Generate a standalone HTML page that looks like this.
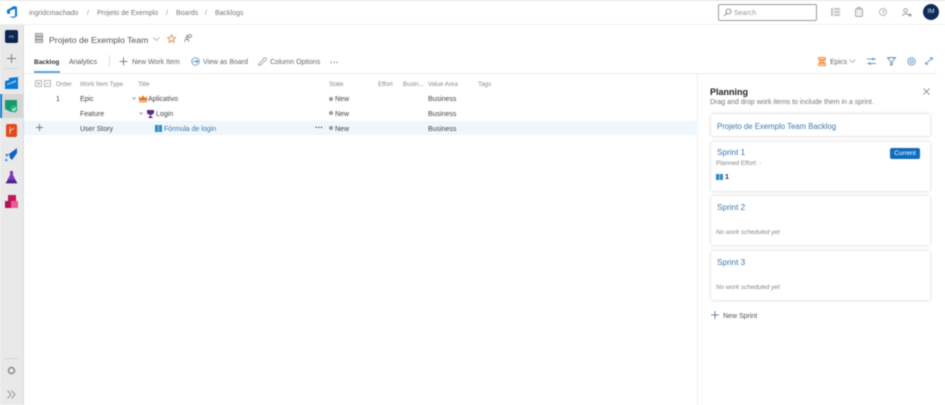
<!DOCTYPE html>
<html><head><meta charset="utf-8">
<style>
html,body{margin:0;padding:0;background:#fff}
#r{position:relative;width:945px;height:405px;overflow:hidden;background:#fff;font-family:"Liberation Sans",sans-serif;color:#444;filter:blur(.4px)}
.t{position:absolute;white-space:nowrap;line-height:12px;font-size:7px;margin-top:1.5px}
.h{color:#8a8a8a;font-size:6.2px;margin-top:.5px}
.b{position:absolute}
.card{position:absolute;left:711px;width:219px;background:#fff;border-radius:2px;box-shadow:0 0 3px rgba(0,0,0,.2)}
.l{color:#3f77ad;font-size:8.2px;margin-top:0}
svg{position:absolute;overflow:visible}
</style></head><body><div id="r">
<div class="b" style="left:0;top:0;width:945px;height:1px;background:#e4e4e4"></div>
<div class="b" style="left:0;top:24px;width:945px;height:1px;background:#eee"></div>
<div class="b" style="left:0;top:25px;width:23px;height:380px;background:#e9e9e9;border-right:1px solid #ddd"></div>
<svg style="left:6px;top:5px" width="12" height="14" viewBox="0 0 12 14"><path d="M1 5 L8 1 L11 2 V11 L8 13 L3 11.5 H9 V4 L4 5.5 V9 L1 8.5Z" fill="#0f78d4"/></svg>
<div class="t" style="left:29px;top:6px;color:#777">ingridcmachado</div>
<div class="t" style="left:87px;top:6px;color:#999">/</div>
<div class="t" style="left:97px;top:6px;color:#777">Projeto de Exemplo</div>
<div class="t" style="left:166px;top:6px;color:#999">/</div>
<div class="t" style="left:176px;top:6px;color:#777">Boards</div>
<div class="t" style="left:205px;top:6px;color:#999">/</div>
<div class="t" style="left:215px;top:6px;color:#777">Backlogs</div>

<div class="b" style="left:718px;top:4px;width:97px;height:15px;border:1px solid #9a9a9a;border-radius:2px"></div>
<svg style="left:723px;top:8px" width="9" height="9" viewBox="0 0 9 9" fill="none" stroke="#777" stroke-width=".8"><circle cx="5.5" cy="3.5" r="2.5"/><path d="M3.7 5.3 L1 8"/></svg>
<div class="t" style="left:734px;top:6.500px;color:#999">Search</div>
<svg style="left:831px;top:8px" width="9" height="8" viewBox="0 0 9 8" fill="#c4c4c4"><rect width="2" height="8"/><rect x="3" width="6" height="2"/><rect x="3" y="3" width="6" height="2"/><rect x="3" y="6" width="6" height="2"/></svg>
<svg style="left:855px;top:7px" width="8" height="10" viewBox="0 0 8 10" fill="#eee" stroke="#aaa"><rect x=".5" y="2" width="7" height="7.5" rx="1"/><path d="M2.500 2V.5H5.500V2" fill="none"/></svg>
<svg style="left:879px;top:8px" width="8" height="8" viewBox="0 0 8 8" fill="none" stroke="#aaa" stroke-width=".8"><circle cx="4" cy="4" r="3.600"/><path d="M3 3.200Q4 1.800 5 3T4 4.800V5.500M4 6V6.600"/></svg>
<svg style="left:902px;top:8px" width="10" height="9" viewBox="0 0 10 9" fill="none" stroke="#999" stroke-width=".9"><circle cx="3.500" cy="2.500" r="1.800"/><path d="M.5 8C.5 5.500 6 5 6.500 7"/><circle cx="8" cy="7" r="1" fill="#999"/></svg>
<div class="b" style="left:923px;top:4px;width:16px;height:16px;border-radius:50%;background:#0d2a5c;color:#dde;font-size:6.500px;line-height:16px;text-align:center">IM</div>

<div class="b" style="left:5px;top:30px;width:13px;height:13px;border-radius:2px;background:#0d2450;color:#ccd;font-size:4px;line-height:13px;text-align:center">PE</div>
<svg style="left:6px;top:53px" width="11" height="11" viewBox="0 0 11 11" stroke="#8a7a86" stroke-width="1"><path d="M5.500 1V10M1 5.500H10"/></svg>
<div class="b" style="left:4px;top:68px;width:15px;height:1px;background:#d4d4d4"></div>
<svg style="left:5px;top:77px" width="13" height="12" viewBox="0 0 13 12"><path d="M0 4L4 3V1L13 0V12H0Z" fill="#0f78d4"/><path d="M2 7L11 3V5L2 8Z" fill="#8cc8f0"/></svg>
<div class="b" style="left:0;top:94px;width:23px;height:24px;background:#d6d6d6"></div>
<div class="b" style="left:0;top:94px;width:2px;height:24px;background:#0f78d4"></div>
<svg style="left:5px;top:100px" width="13" height="13" viewBox="0 0 13 13"><path d="M0 0H12V9L6 12L0 9Z" fill="#17996e"/><circle cx="9" cy="9" r="3.500" fill="#2fb98a"/><path d="M7.500 9L8.700 10.300L10.800 7.800" stroke="#fff" fill="none"/></svg>
<svg style="left:6px;top:124px" width="11" height="13" viewBox="0 0 11 13"><rect width="11" height="13" rx="2" fill="#e0491f"/><path d="M4 3V10M4 7L8 4" stroke="#f9c0a8" fill="none"/></svg>
<svg style="left:5px;top:148px" width="13" height="13" viewBox="0 0 13 13"><path d="M4 6L12 0V5L7 12L5 10Z" fill="#0e63c4"/><path d="M0 6H4L2 9ZM1 10L3 13H0Z" fill="#2d8ae0"/></svg>
<svg style="left:5px;top:171px" width="13" height="13" viewBox="0 0 13 13"><path d="M5 0H8V4L12.500 12.500H.5L5 4Z" fill="#7a3cb8"/><path d="M3 9H10L11.500 12H1.500Z" fill="#52208e"/></svg>
<svg style="left:5px;top:195px" width="13" height="14" viewBox="0 0 13 14"><rect x="3" width="8" height="7" fill="#c2185b"/><rect y="6" width="7" height="7" fill="#ad1457"/><rect x="6" y="6" width="7" height="7" fill="#ec5a9a"/></svg>
<div class="b" style="left:4px;top:358px;width:15px;height:1px;background:#d4d4d4"></div>
<svg style="left:7px;top:366px" width="9" height="9" viewBox="0 0 9 9" fill="none" stroke="#888" stroke-width="1.500"><circle cx="4.500" cy="4.500" r="3"/></svg>
<svg style="left:7px;top:390px" width="9" height="9" viewBox="0 0 9 9" fill="none" stroke="#999"><path d="M.5 .5L4 4.500L.5 8.500M4.500 .5L8 4.500L4.500 8.500"/></svg>

<svg style="left:34px;top:33px" width="10" height="10" viewBox="0 0 10 10" fill="#ddd" stroke="#888" stroke-width=".8"><rect x="1.500" y=".5" width="7" height="2.500"/><rect x="1.500" y="3.800" width="7" height="2.500"/><rect x="1.500" y="7" width="7" height="2.500"/></svg>
<div class="t" style="left:49px;top:32.500px;font-size:8.700px;color:#555">Projeto de Exemplo Team</div>
<svg style="left:153px;top:37px" width="7" height="4" viewBox="0 0 7 4" fill="none" stroke="#999" stroke-width=".7"><path d="M.5 .5L3.500 3.500L6.500 .5"/></svg>
<svg style="left:167px;top:34px" width="9" height="9" viewBox="0 0 10 10" fill="none" stroke="#dd8a3e" stroke-width=".9"><path d="M5 .8L6.200 3.800L9.400 4L6.900 6L7.700 9.200L5 7.500L2.300 9.200L3.100 6L.6 4L3.800 3.800Z"/></svg>
<svg style="left:184px;top:34px" width="9" height="9" viewBox="0 0 9 9" fill="none" stroke="#777" stroke-width=".7"><circle cx="6" cy="2" r="1.500"/><path d="M3 1L.5 8M3 1L5 8M1.500 5.500H4"/></svg>

<div class="t" style="left:34px;top:55px;color:#333;font-weight:bold;font-size:6.500px">Backlog</div>
<div class="b" style="left:34px;top:71px;width:26px;height:2px;background:#5ea3dc"></div>
<div class="t" style="left:69px;top:55px;color:#555">Analytics</div>
<div class="b" style="left:109px;top:55px;width:1px;height:12px;background:#ddd"></div>
<svg style="left:119px;top:57px" width="9" height="9" viewBox="0 0 9 9" stroke="#4a6a86" stroke-width=".8"><path d="M4.500 .5V8.500M.5 4.500H8.500"/></svg>
<div class="t" style="left:132px;top:55px;color:#666">New Work Item</div>
<svg style="left:191px;top:57px" width="9" height="9" viewBox="0 0 9 9" fill="none" stroke="#3a7ab8" stroke-width=".7"><circle cx="4.500" cy="4.500" r="3.800"/><path d="M2 4.500H7M5 2.700L7 4.500L5 6.300"/></svg>
<div class="t" style="left:203px;top:55px;color:#666">View as Board</div>
<svg style="left:258px;top:57px" width="9" height="9" viewBox="0 0 9 9" fill="none" stroke="#888" stroke-width=".7"><path d="M.7 8.300L1 6.500L5 2.500C5.500 .5 8 .5 8.500 1.500C8.800 3 7.500 4 6.500 4L2.500 8Z"/></svg>
<div class="t" style="left:270px;top:55px;color:#666">Column Options</div>
<div class="t" style="left:330px;top:55px;color:#777;font-size:8px;font-weight:bold;letter-spacing:.3px">···</div>

<svg style="left:818px;top:57px" width="8" height="9" viewBox="0 0 8 9" fill="#fbd0a8" stroke="#ec8a3c" stroke-width=".8"><rect x=".5" y=".5" width="7" height="2.300"/><rect x="1.700" y="3.300" width="4.600" height="2.300"/><rect x=".5" y="6.200" width="7" height="2.300"/></svg>
<div class="t" style="left:830px;top:55px;color:#666">Epics</div>
<svg style="left:849px;top:59px" width="7" height="4" viewBox="0 0 7 4" fill="none" stroke="#999" stroke-width=".7"><path d="M.5 .5L3.500 3.500L6.500 .5"/></svg>
<svg style="left:867px;top:57px" width="9" height="9" viewBox="0 0 9 9" fill="none" stroke="#4a7ca8" stroke-width=".8"><path d="M0 2H9M0 6.500H9M6 .5V3.500M3 5V8"/></svg>
<svg style="left:887px;top:57px" width="9" height="9" viewBox="0 0 9 9" fill="none" stroke="#4a7ca8" stroke-width=".8"><path d="M.5 .7H8.500L5.300 4.500V7.500L3.700 8.300V4.500Z"/></svg>
<svg style="left:907px;top:57px" width="9" height="9" viewBox="0 0 9 9" fill="none" stroke="#7a9fc2"><circle cx="4.500" cy="4.500" r="3.700"/><circle cx="4.500" cy="4.500" r="1.500"/></svg>
<svg style="left:925px;top:57px" width="8" height="8" viewBox="0 0 8 8" fill="none" stroke="#4a7ca8" stroke-width=".7"><path d="M.7 7.300L7.300 .7M4.800 .7H7.300V3.200M.7 4.800V7.300H3.200"/></svg>

<div class="b" style="left:24px;top:73px;width:913px;height:1px;background:#eee"></div>
<div class="b" style="left:697px;top:73px;width:1px;height:332px;background:#eee"></div>

<svg style="left:35px;top:80px" width="17" height="8" viewBox="0 0 17 8" fill="none" stroke="#999" stroke-width=".7"><rect x=".5" y=".5" width="6" height="6"/><path d="M2 3.500H5M3.500 2V5"/><rect x="9.500" y=".5" width="6" height="6" stroke="#a58aa5"/><path d="M11 3.500H14"/></svg>
<div class="t h" style="left:56px;top:78px">Order</div>
<div class="t h" style="left:80px;top:78px">Work Item Type</div>
<div class="t h" style="left:138px;top:78px">Title</div>
<div class="t h" style="left:329px;top:78px">State</div>
<div class="t h" style="left:378px;top:78px">Effort</div>
<div class="t h" style="left:403px;top:78px">Busin...</div>
<div class="t h" style="left:428px;top:78px">Value Area</div>
<div class="t h" style="left:478px;top:78px">Tags</div>

<div class="t" style="left:56px;top:92px">1</div>
<div class="t" style="left:80px;top:92px">Epic</div>
<svg style="left:131.500px;top:97px" width="4" height="3" viewBox="0 0 5 4" fill="none" stroke="#777" stroke-width=".9"><path d="M.5 .5L2.500 3L4.500 .5"/></svg>
<svg style="left:138.500px;top:95px" width="8" height="7.500" viewBox="0 0 9 8" fill="#e8701a"><path d="M0 1L2.300 3.500L4.500 0L6.700 3.500L9 1V6H0ZM0 6.800H9V8H0Z"/></svg>
<div class="t" style="left:148px;top:92px">Aplicativo</div>
<div class="b" style="left:329px;top:96.500px;width:4px;height:4px;border-radius:50%;background:#999"></div>
<div class="t" style="left:335px;top:92px">New</div>
<div class="t" style="left:428px;top:92px">Business</div>

<div class="t" style="left:80px;top:107px">Feature</div>
<svg style="left:139px;top:112px" width="4" height="3" viewBox="0 0 5 4" fill="none" stroke="#777" stroke-width=".9"><path d="M.5 .5L2.500 3L4.500 .5"/></svg>
<svg style="left:147px;top:110px" width="7" height="8" viewBox="0 0 7 8" fill="#5c2a86"><path d="M0 0H7V2.500C7 4 5 4.500 4 5V6.500H5.500V8H1.500V6.500H3V5C2 4.500 0 4 0 2.500Z"/></svg>
<div class="t" style="left:156px;top:107px">Login</div>
<div class="b" style="left:329px;top:111px;width:4px;height:4px;border-radius:50%;background:#999"></div>
<div class="t" style="left:335px;top:107px">New</div>
<div class="t" style="left:428px;top:107px">Business</div>

<div class="b" style="left:24px;top:121px;width:672px;height:14px;background:#eff6fc"></div>
<svg style="left:36px;top:124px" width="7" height="7" viewBox="0 0 7 7" stroke="#5a7a9a" stroke-width=".9"><path d="M3.500 0V7M0 3.500H7"/></svg>
<div class="t" style="left:80px;top:122px">User Story</div>
<svg style="left:155px;top:124.500px" width="7" height="7" viewBox="0 0 7 7" fill="#2a8cc4"><rect width="3.200" height="7"/><rect x="3.800" width="3.200" height="7"/></svg>
<div class="t" style="left:164px;top:122px;color:#3f77ad">Fórmula de login</div>
<div class="t" style="left:315px;top:120px;color:#333;font-size:8px;font-weight:bold">···</div>
<div class="b" style="left:329px;top:126px;width:4px;height:4px;border-radius:50%;background:#999"></div>
<div class="t" style="left:335px;top:122px">New</div>
<div class="t" style="left:428px;top:122px">Business</div>

<div class="t" style="left:710px;top:84px;font-size:9px;font-weight:bold;color:#222">Planning</div>
<div class="t" style="left:710px;top:95.500px;color:#777">Drag and drop work items to include them in a sprint.</div>
<svg style="left:923px;top:88px" width="7" height="7" viewBox="0 0 7 7" stroke="#666" stroke-width=".7"><path d="M.5 .5L6.500 6.500M6.500 .5L.5 6.500"/></svg>

<div class="card" style="top:114px;height:22px"></div>
<div class="t l" style="left:717px;top:120.500px;font-size:7.800px">Projeto de Exemplo Team Backlog</div>

<div class="card" style="top:142px;height:49px"></div>
<div class="t l" style="left:717px;top:147px">Sprint 1</div>
<div class="b" style="left:890px;top:148px;width:30px;height:11px;border-radius:2px;background:#0f6cbd;color:#fff;font-size:6.500px;line-height:11px;text-align:center">Current</div>
<div class="t" style="left:716px;top:156.500px;color:#888;font-size:6.300px">Planned Effort: -</div>
<svg style="left:716px;top:174px" width="7" height="6" viewBox="0 0 7 6" fill="#2a8cc4"><rect width="3.200" height="6"/><rect x="3.800" width="3.200" height="6"/></svg>
<div class="t" style="left:725px;top:170px;color:#333;font-weight:bold">1</div>

<div class="card" style="top:196px;height:49px"></div>
<div class="t l" style="left:717px;top:202px">Sprint 2</div>
<div class="t" style="left:716px;top:225px;color:#888;font-style:italic;font-size:6.300px">No work scheduled yet</div>

<div class="card" style="top:251px;height:49px"></div>
<div class="t l" style="left:717px;top:257px">Sprint 3</div>
<div class="t" style="left:716px;top:280px;color:#888;font-style:italic;font-size:6.300px">No work scheduled yet</div>

<svg style="left:711px;top:311px" width="8" height="8" viewBox="0 0 8 8" stroke="#4a6a86" stroke-width=".8"><path d="M4 0V8M0 4H8"/></svg>
<div class="t" style="left:723px;top:309px;color:#555">New Sprint</div>
</div></body></html>
